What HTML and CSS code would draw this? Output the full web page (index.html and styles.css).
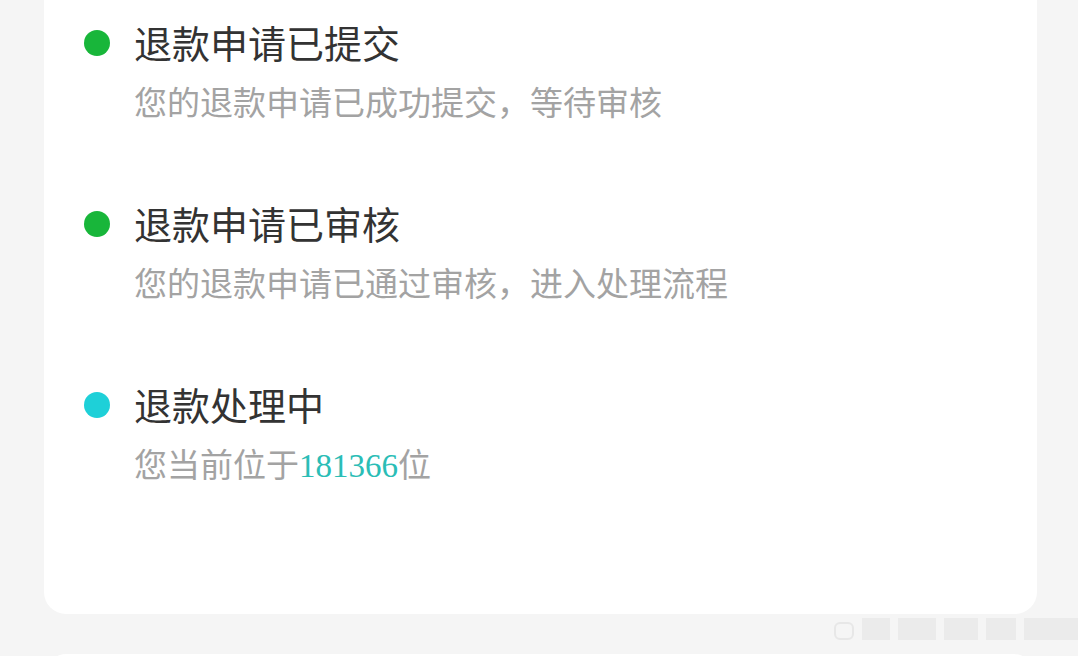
FILE: index.html
```html
<!DOCTYPE html>
<html lang="zh">
<head>
<meta charset="utf-8">
<link rel="stylesheet" href="styles.css">
</head>
<body>
<div class="page">
  <div class="card">
    <div class="step">
      <span class="dot green"></span>
      <div class="text">
        <div class="title">退款申请已提交</div>
        <div class="desc">您的退款申请已成功提交，等待审核</div>
      </div>
    </div>
    <div class="step">
      <span class="dot green"></span>
      <div class="text">
        <div class="title">退款申请已审核</div>
        <div class="desc">您的退款申请已通过审核，进入处理流程</div>
      </div>
    </div>
    <div class="step">
      <span class="dot cyan"></span>
      <div class="text">
        <div class="title">退款处理中</div>
        <div class="desc">您当前位于<span class="num">181366</span>位</div>
      </div>
    </div>
  </div>
  <div class="card2"></div>
  <div class="watermark">
    <span class="wm-icon"></span>
    <span class="wm-bar w1"></span>
    <span class="wm-bar w2"></span>
    <span class="wm-bar w3"></span>
    <span class="wm-bar w4"></span>
    <span class="wm-bar w5"></span>
  </div>
</div>
</body>
</html>
```
FILE: styles.css
```css
html, body {
  margin: 0;
  padding: 0;
  background: #f5f5f5;
  overflow: hidden;
}
.page {
  position: relative;
  width: 1078px;
  height: 656px;
  font-family: "Noto Sans CJK SC", "Noto Sans", sans-serif;
}
.card {
  margin-left: 44px;
  width: 993px;
  background: #ffffff;
  border-radius: 0 0 22px 22px;
  padding: 20px 0 126px 40px;
  box-sizing: border-box;
  display: flex;
  flex-direction: column;
  gap: 78px;
}
.step {
  display: flex;
  align-items: flex-start;
  gap: 24px;
}
.dot {
  flex: none;
  width: 26px;
  height: 26px;
  border-radius: 50%;
  margin-top: 10px;
}
.dot.green { background: #18b63a; }
.dot.cyan { background: #1ed0d8; }
.text {
  display: flex;
  flex-direction: column;
  gap: 15px;
}
.title {
  font-size: 38px;
  line-height: 44px;
  color: #333333;
}
.desc {
  font-size: 33px;
  line-height: 44px;
  color: #a3a3a3;
}
.num {
  font-family: "Liberation Serif", "Times New Roman", serif;
  color: #2bbdb6;
}
.card2 {
  margin: 40px 0 0 48px;
  width: 984px;
  height: 20px;
  background: #ffffff;
  border-radius: 18px 18px 0 0;
}
.watermark {
  position: absolute;
  left: 834px;
  top: 618px;
  display: flex;
  align-items: flex-end;
  gap: 8px;
  opacity: 0.35;
}
.wm-icon {
  width: 16px;
  height: 14px;
  border: 2px solid #cfcfcf;
  border-radius: 6px;
}
.wm-bar {
  height: 22px;
  background: #dadada;
}
.w1 { width: 28px; }
.w2 { width: 38px; }
.w3 { width: 34px; }
.w4 { width: 30px; }
.w5 { width: 62px; }
```
